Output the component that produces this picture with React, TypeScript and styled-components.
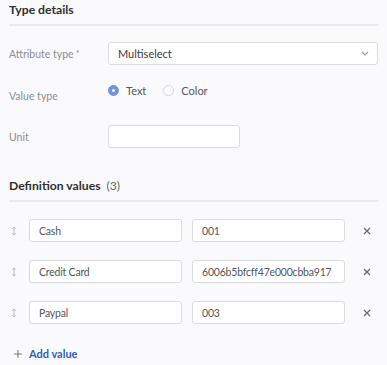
import React from "react";
import styled, { createGlobalStyle } from "styled-components";

const GlobalStyle = createGlobalStyle`
  body {
    margin: 0;
    background: #fafafc;
    font-family: Lato, "Open Sans", sans-serif;
    color: #333;
  }
`;

const values = [
  { name: "Cash", code: "001" },
  { name: "Credit Card", code: "6006b5bfcff47e000cbba917" },
  { name: "Paypal", code: "003" },
];

export default function App() {
  return (
    <>
      <GlobalStyle />
      <Page>
        <SectionHeader>
          <Title>Type details</Title>
        </SectionHeader>

        <FormRow $top={16}>
          <Label>
            Attribute type<Required>*</Required>
          </Label>
          <Select>
            <span>Multiselect</span>
            <svg width="8" height="5" viewBox="0 0 8 5" fill="none">
              <path d="M1 1l3 3 3-3" stroke="#999" strokeWidth="1.1" />
            </svg>
          </Select>
        </FormRow>

        <FormRow $top={14}>
          <Label $offset={10}>Value type</Label>
          <Radios>
            <RadioOption>
              <Radio $checked />
              Text
            </RadioOption>
            <RadioOption>
              <Radio />
              Color
            </RadioOption>
          </Radios>
        </FormRow>

        <FormRow $top={23}>
          <Label>Unit</Label>
          <Input $width={132} />
        </FormRow>

        <SectionHeader $top={28}>
          <Title>
            Definition values <Count>(3)</Count>
          </Title>
        </SectionHeader>

        <ValueList>
          {values.map((v) => (
            <ValueRow key={v.name}>
              <DragHandle width="6" height="10" viewBox="0 0 6 10" fill="none">
                <path
                  d="M3 1v8M1.3 2.6L3 1l1.7 1.6M1.3 7.4L3 9l1.7-1.6"
                  stroke="#b8b8be"
                  strokeWidth="1"
                />
              </DragHandle>
              <Input>{v.name}</Input>
              <Input>{v.code}</Input>
              <RemoveIcon width="8" height="8" viewBox="0 0 8 8" fill="none">
                <path d="M1 1l6 6M7 1L1 7" stroke="#666" strokeWidth="1.2" />
              </RemoveIcon>
            </ValueRow>
          ))}
        </ValueList>

        <AddValue>
          <svg width="8" height="8" viewBox="0 0 8 8" fill="none">
            <path d="M4 0v8M0 4h8" stroke="#777" strokeWidth="1" />
          </svg>
          Add value
        </AddValue>
      </Page>
    </>
  );
}

const Page = styled.div`
  padding: 0 9px;
  width: 369px;
`;

const SectionHeader = styled.div<{ $top?: number }>`
  margin-top: ${(p) => p.$top ?? 0}px;
  padding-top: 1px;
  padding-bottom: 5px;
  border-bottom: 2px solid #eaeaee;
`;

const Title = styled.h2`
  margin: 0;
  font-size: 12.2px;
  line-height: 18px;
  font-weight: 700;
  color: #2f2f33;
`;

const Count = styled.span`
  font-weight: 400;
  color: #666;
  margin-left: 3px;
`;

const FormRow = styled.div<{ $top: number }>`
  display: grid;
  grid-template-columns: 99px 1fr;
  align-items: center;
  margin-top: ${(p) => p.$top}px;
  min-height: 23px;
`;

const Label = styled.div<{ $offset?: number }>`
  font-size: 10.5px;
  color: #8c8c92;
  padding-top: ${(p) => p.$offset ?? 0}px;
`;

const Required = styled.span`
  margin-left: 2px;
  font-size: 9px;
  vertical-align: top;
`;

const Select = styled.div`
  display: flex;
  align-items: center;
  justify-content: space-between;
  height: 23px;
  box-sizing: border-box;
  padding: 0 8px 0 9px;
  background: #fff;
  border: 1px solid #dcdce0;
  border-radius: 3px;
  font-size: 11px;
  color: #3a3a3e;
`;

const Radios = styled.div`
  display: flex;
  align-items: center;
  gap: 17px;
  height: 23px;
`;

const RadioOption = styled.label`
  display: flex;
  align-items: center;
  gap: 7px;
  font-size: 11px;
  color: #55555a;
`;

const Radio = styled.span<{ $checked?: boolean }>`
  width: 11px;
  height: 11px;
  box-sizing: border-box;
  border-radius: 50%;
  background: ${(p) => (p.$checked ? "#7494d6" : "#fff")};
  border: 1px solid ${(p) => (p.$checked ? "#7494d6" : "#d4d4d8")};
  position: relative;

  &::after {
    content: "";
    display: ${(p) => (p.$checked ? "block" : "none")};
    position: absolute;
    width: 3px;
    height: 3px;
    border-radius: 50%;
    background: #fff;
    left: 3px;
    top: 3px;
  }
`;

const Input = styled.div<{ $width?: number }>`
  display: flex;
  align-items: center;
  height: 23px;
  width: ${(p) => (p.$width ? `${p.$width}px` : "auto")};
  box-sizing: border-box;
  padding: 0 9px;
  background: #fff;
  border: 1px solid #dcdce0;
  border-radius: 3px;
  font-size: 10.5px;
  letter-spacing: -0.2px;
  color: #55555a;
  white-space: nowrap;
  overflow: hidden;
`;

const ValueList = styled.div`
  display: flex;
  flex-direction: column;
  gap: 18px;
  margin-top: 17px;
`;

const ValueRow = styled.div`
  display: grid;
  grid-template-columns: 10px 153px 153px 1fr;
  column-gap: 10px;
  align-items: center;
`;

const DragHandle = styled.svg`
  justify-self: center;
`;

const RemoveIcon = styled.svg`
  justify-self: center;
`;

const AddValue = styled.div`
  display: flex;
  align-items: center;
  gap: 7px;
  margin-top: 23px;
  padding-left: 5px;
  font-size: 11px;
  font-weight: 700;
  color: #2f5fc0;
`;
